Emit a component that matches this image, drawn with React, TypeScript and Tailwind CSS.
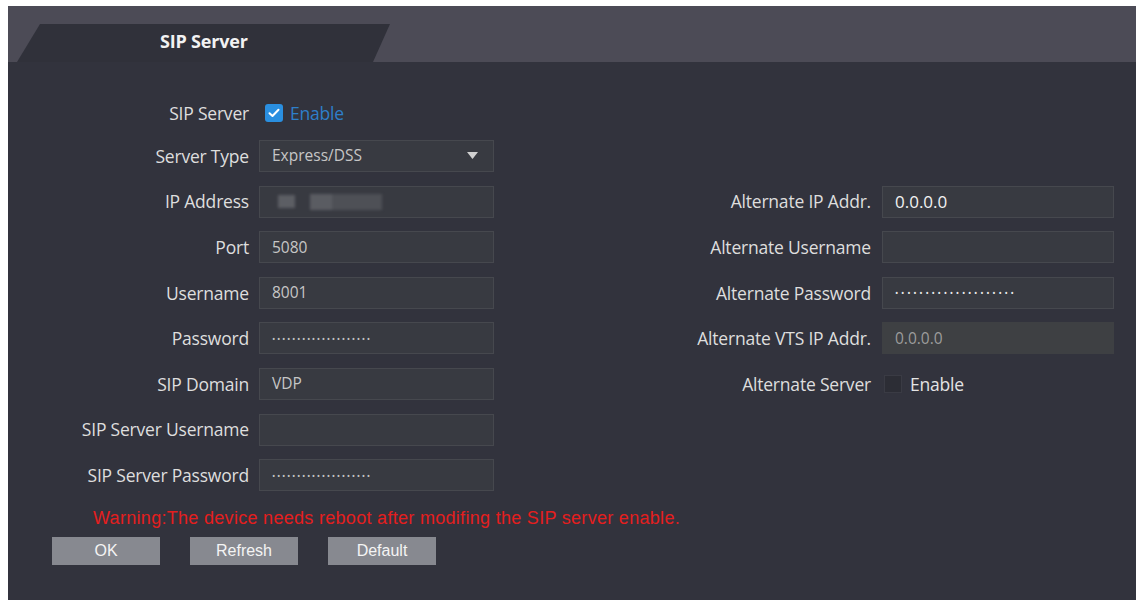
import React from "react";

const font = { fontFamily: '"Open Sans", "Liberation Sans", sans-serif' };

function Dots({ bright }: { bright?: boolean }) {
  return (
    <span
      className={`text-[9px] leading-none ${bright ? "text-[#ececec] tracking-[2.7px]" : "text-[#c4c4c4] tracking-[1.6px]"}`}
    >
      ••••••••••••••••••••
    </span>
  );
}

function Field({
  children,
  disabled,
  className = "",
}: {
  children?: React.ReactNode;
  disabled?: boolean;
  className?: string;
}) {
  return (
    <div
      className={`h-[32px] flex items-center px-[12px] text-[15.5px] ${
        disabled
          ? "bg-[#3e4043] border border-[#3e4043] text-[#9c9c9c]"
          : "bg-[#383a41] border border-[#46484e] text-[#c6c6c6]"
      } ${className}`}
    >
      {children}
    </div>
  );
}

function Label({ children }: { children: React.ReactNode }) {
  return (
    <div className="h-[32px] flex items-center justify-end text-[17.5px] text-[#dedede] whitespace-nowrap tracking-[-0.2px]">
      {children}
    </div>
  );
}

export default function App() {
  return (
    <div className="w-[1140px] h-[604px] bg-white pt-[6px] pl-[8px] pr-[4px] pb-[4px]" style={font}>
      <div className="w-full h-full flex flex-col bg-[#32333d]">
        {/* header band with tab */}
        <div className="h-[56px] bg-[#4c4b56] flex items-end shrink-0">
          <div className="ml-[9px] w-[373px] h-[38px] bg-[#30313a] [clip-path:polygon(23px_0,100%_0,calc(100%-17px)_100%,0_100%)] pl-[143px] flex items-center">
            <span className="text-[18px] font-bold text-[#f2f2f2] -mt-[4px] tracking-[-0.2px]">SIP Server</span>
          </div>
        </div>

        {/* form */}
        <div className="pt-[35px]">
          <div className="grid grid-cols-[241px_235px] gap-x-[10px]">
            <Label>SIP Server</Label>
            <div className="h-[32px] flex items-center gap-[7px] pl-[6px]">
              <div className="w-[18px] h-[18px] rounded-[3px] bg-[#2a8fe0] flex items-center justify-center">
                <svg width="12" height="10" viewBox="0 0 12 10" fill="none">
                  <path d="M1.5 5.2 L4.5 8 L10.5 1.8" stroke="white" strokeWidth="2" strokeLinecap="round" strokeLinejoin="round" />
                </svg>
              </div>
              <span className="text-[17.5px] text-[#2e7fca] tracking-[-0.2px]">Enable</span>
            </div>
          </div>

          <div className="mt-[11px] grid grid-cols-[241px_235px_368px_232px] gap-x-[10px] gap-y-[13.6px]">
            <Label>Server Type</Label>
            <Field className="justify-between">
              <span>Express/DSS</span>
              <svg width="11" height="8" viewBox="0 0 11 8" className="mr-[3px]">
                <path d="M0 0 L11 0 L5.5 7 Z" fill="#d0d0d0" />
              </svg>
            </Field>
            <div />
            <div />

            <Label>IP Address</Label>
            <Field>
              <div className="flex items-center gap-[15px] blur-[1.5px] pl-[6px]">
                <div className="w-[17px] h-[13px] bg-[#5c5e64]" />
                <div className="flex">
                  <div className="w-[22px] h-[16px] bg-[#5a5c62]" />
                  <div className="w-[50px] h-[16px] bg-[#4e5056]" />
                </div>
              </div>
            </Field>
            <div className="pr-[1px]"><Label>Alternate IP Addr.</Label></div>
            <Field className="!text-[17px] !text-[#f2f2f2]">0.0.0.0</Field>

            <Label>Port</Label>
            <Field>5080</Field>
            <div className="pr-[1px]"><Label>Alternate Username</Label></div>
            <Field />

            <Label>Username</Label>
            <Field>8001</Field>
            <div className="pr-[1px]"><Label>Alternate Password</Label></div>
            <Field><Dots bright /></Field>

            <Label>Password</Label>
            <Field><Dots /></Field>
            <div className="pr-[1px]"><Label>Alternate VTS IP Addr.</Label></div>
            <Field disabled>0.0.0.0</Field>

            <Label>SIP Domain</Label>
            <Field>VDP</Field>
            <div className="pr-[1px]"><Label>Alternate Server</Label></div>
            <div className="h-[32px] flex items-center gap-[8px] pl-[2px]">
              <div className="w-[18px] h-[18px] bg-[#2c2d35] border border-[#3a3b44]" />
              <span className="text-[17.5px] text-[#e4e4e4] tracking-[-0.2px]">Enable</span>
            </div>

            <Label>SIP Server Username</Label>
            <Field />
            <div />
            <div />

            <Label>SIP Server Password</Label>
            <Field><Dots /></Field>
            <div />
            <div />
          </div>

          <div
            className="mt-[18px] pl-[85px] text-[18px] leading-none text-[#e41e1e] tracking-[0.3px]"
            style={{ fontFamily: '"Liberation Sans", sans-serif' }}
          >
            Warning:The device needs reboot after modifing the SIP server enable.
          </div>

          <div className="mt-[10px] pl-[44px] flex gap-[30px]">
            {["OK", "Refresh", "Default"].map((b) => (
              <button
                key={b}
                className="w-[108px] h-[28px] bg-[#878990] text-[#f4f4f4] text-[16px]"
                style={{ fontFamily: '"Liberation Sans", sans-serif' }}
              >
                {b}
              </button>
            ))}
          </div>
        </div>
      </div>
    </div>
  );
}
